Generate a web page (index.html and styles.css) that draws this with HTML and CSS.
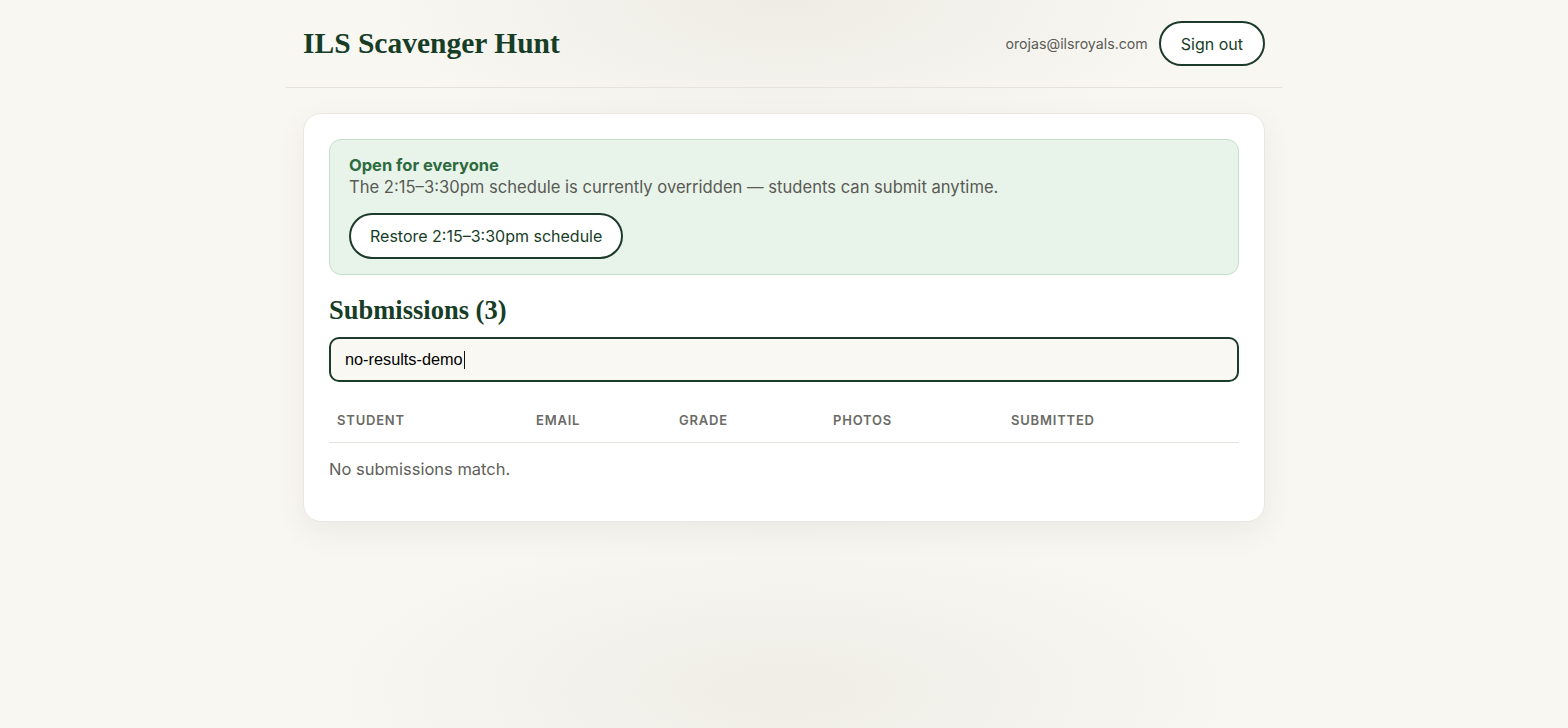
FILE: index.html
```html
<!DOCTYPE html>
<html>
<head>
<meta charset="utf-8">
<link rel="stylesheet" href="styles.css">
</head>
<body>
<div class="page">
  <header class="topbar">
    <h1 class="brand">ILS Scavenger Hunt</h1>
    <div class="account">
      <span class="email">orojas@ilsroyals.com</span>
      <button class="btn">Sign out</button>
    </div>
  </header>
  <main class="card">
    <section class="notice">
      <div class="notice-title">Open for everyone</div>
      <div class="notice-text">The 2:15–3:30pm schedule is currently overridden — students can submit anytime.</div>
      <button class="btn btn-restore">Restore 2:15–3:30pm schedule</button>
    </section>
    <h2 class="section-title">Submissions (3)</h2>
    <div class="search"><span class="search-text">no-results-demo</span><span class="caret"></span></div>
    <table class="table">
      <thead>
        <tr>
          <th class="c1">Student</th>
          <th class="c2">Email</th>
          <th class="c3">Grade</th>
          <th class="c4">Photos</th>
          <th class="c5">Submitted</th>
        </tr>
      </thead>
    </table>
    <p class="empty">No submissions match.</p>
  </main>
</div>
</body>
</html>
```
FILE: styles.css
```css
* { box-sizing: border-box; }
html, body { margin: 0; height: 100%; }
body {
  font-family: Inter, "Noto Sans", sans-serif;
  background-color: #f8f7f2;
  background-image:
    radial-gradient(ellipse 420px 160px at 50% 0%, rgba(225,222,212,0.45), rgba(248,247,242,0) 100%),
    radial-gradient(ellipse 480px 170px at 50% 690px, rgba(225,222,212,0.4), rgba(248,247,242,0) 100%);
  color: #1b3a29;
}
.page {
  width: 996px;
  margin: 0 auto;
}
.topbar {
  display: flex;
  align-items: center;
  justify-content: space-between;
  height: 88px;
  padding: 0 17px;
  border-bottom: 1px solid #e4e2da;
}
.brand {
  margin: 0;
  font-family: "Liberation Serif", "DejaVu Serif", serif;
  font-weight: 700;
  font-size: 29.5px;
  color: #173d27;
  letter-spacing: 0;
}
.account {
  display: flex;
  align-items: center;
  gap: 11px;
}
.email {
  font-size: 14.2px;
  color: #5b5b57;
}
.btn {
  font-family: Inter, "Noto Sans", sans-serif;
  font-size: 16px;
  color: #173d27;
  background: #fff;
  border: 2px solid #1d3b2b;
  border-radius: 999px;
  height: 45px;
  padding: 0 20px;
  cursor: pointer;
}
.card {
  margin: 25px 17px 0;
  background: #fff;
  border: 1px solid #e9e7df;
  border-radius: 18px;
  padding: 25px 25px 42px;
  box-shadow: 0 10px 30px rgba(60,55,40,0.07);
}
.notice {
  background: #e8f4ea;
  border: 1px solid #c4e0ca;
  border-radius: 12px;
  padding: 14px 19px 15px;
}
.notice-title {
  font-weight: 700;
  font-size: 16.5px;
  color: #2e6a40;
  line-height: 22px;
}
.notice-text {
  font-size: 16.6px;
  color: #5a5a55;
  line-height: 22px;
}
.btn-restore {
  margin-top: 15px;
  height: 46px;
  padding: 0 19px;
}
.section-title {
  margin: 20px 0 12px;
  font-family: "Liberation Serif", "DejaVu Serif", serif;
  font-weight: 700;
  font-size: 26.5px;
  color: #173d27;
  line-height: 30px;
}
.search {
  height: 45px;
  border: 2px solid #1d3b2b;
  border-radius: 10px;
  background: #f9f8f3;
  display: flex;
  align-items: center;
  padding: 0 14px;
  font-family: "Liberation Sans", Arial, sans-serif;
  font-size: 16.3px;
  color: #000;
}
.caret {
  display: inline-block;
  width: 1px;
  height: 18px;
  background: #111;
  margin-left: 1px;
}
.table {
  width: 100%;
  border-collapse: collapse;
  margin-top: 18px;
  table-layout: fixed;
}
.table th {
  text-align: left;
  font-size: 13px;
  font-weight: 600;
  letter-spacing: 0.8px;
  text-transform: uppercase;
  color: #6b6b66;
  padding: 12px 8px 14px;
  border-bottom: 1px solid #e6e4de;
}
.c1 { width: 199px; }
.c2 { width: 143px; }
.c3 { width: 154px; }
.c4 { width: 178px; }
.c5 { width: auto; }
.empty {
  margin: 16px 0 0;
  font-size: 16.5px;
  color: #5f5f5a;
}
```
